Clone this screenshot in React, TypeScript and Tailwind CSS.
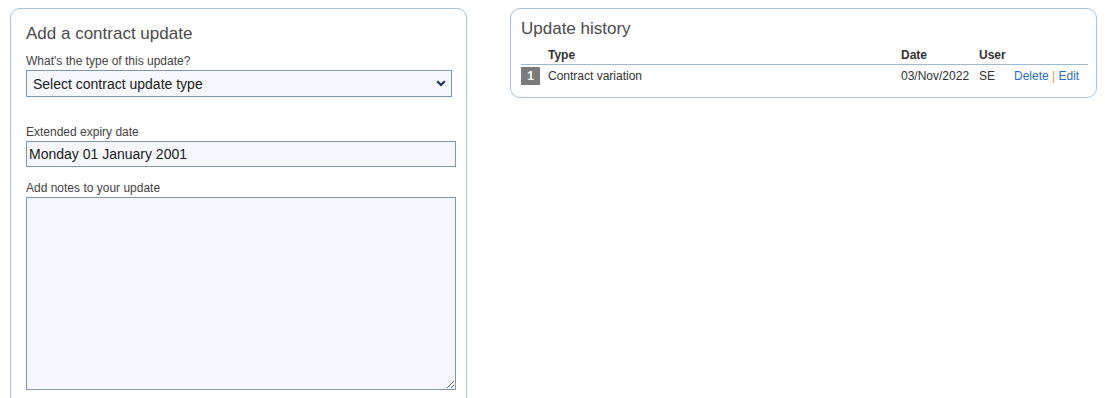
import React from "react";

export default function App() {
  return (
    <div className="min-h-screen bg-white font-['Liberation_Sans',Arial,sans-serif] flex items-start gap-[43px] pl-[10px] pt-[8px]">
      {/* Left panel */}
      <div className="w-[457px] shrink-0 border border-[#a9c3d8] rounded-[10px] pt-[15px] pl-[15px] pr-[10px] pb-[30px]">
        <h2 className="text-[17px] leading-[20px] text-[#4a4a4a]">Add a contract update</h2>
        <label className="block mt-[10px] text-[12px] leading-[14px] text-[#444]">What's the type of this update?</label>
        <div className="relative mt-[2px] w-[426px] h-[27px]">
          <select className="appearance-none w-full h-full bg-[#f6f8fd] border border-[#7f98b2] pl-[6px] pt-[1px] text-[14px] text-[#1a1a1a] outline-none font-['Liberation_Sans',Arial,sans-serif]">
            <option>Select contract update type</option>
          </select>
          <svg className="absolute right-[6px] top-[10px] pointer-events-none" width="10" height="7" viewBox="0 0 10 7">
            <path d="M1.2 1.2 L5 5 L8.8 1.2" fill="none" stroke="#1f3553" strokeWidth="2.2" />
          </svg>
        </div>
        <label className="block mt-[28px] text-[12px] leading-[14px] text-[#444]">Extended expiry date</label>
        <input
          readOnly
          value="Monday 01 January 2001"
          className="block mt-[2px] w-[430px] h-[26px] bg-[#f6f8fd] border border-[#7f98b2] pl-[2px] text-[14px] text-[#1a1a1a] outline-none font-['Liberation_Sans',Arial,sans-serif]"
        />
        <label className="block mt-[14px] text-[12px] leading-[14px] text-[#444]">Add notes to your update</label>
        <textarea className="block mt-[2px] w-[430px] h-[193px] bg-[#f6f8fd] border border-[#7f98b2] outline-none" />
      </div>

      {/* Right panel */}
      <div className="w-[587px] shrink-0 border border-[#a9c3d8] rounded-[10px] pt-[10px] pl-[10px] pr-[8px] pb-[12px]">
        <h2 className="text-[17px] leading-[20px] text-[#4a4a4a]">Update history</h2>
        <div className="mt-[9px] grid grid-cols-[27px_353px_78px_35px_1fr] text-[12px] leading-[14px] font-bold text-[#333] pb-[2px] border-b border-[#9dbcd4]">
          <div></div>
          <div>Type</div>
          <div>Date</div>
          <div>User</div>
          <div></div>
        </div>
        <div className="mt-[2px] grid grid-cols-[27px_353px_78px_35px_1fr] items-center text-[12px] leading-[18px] text-[#333]">
          <div className="w-[19px] h-[18px] bg-[#7b7b7b] text-white text-center leading-[18px] font-bold">1</div>
          <div>Contract variation</div>
          <div>03/Nov/2022</div>
          <div>SE</div>
          <div>
            <span className="text-[#1f6fbf]">Delete</span>
            <span className="text-[#d19a55]"> | </span>
            <span className="text-[#1f6fbf]">Edit</span>
          </div>
        </div>
      </div>
    </div>
  );
}
